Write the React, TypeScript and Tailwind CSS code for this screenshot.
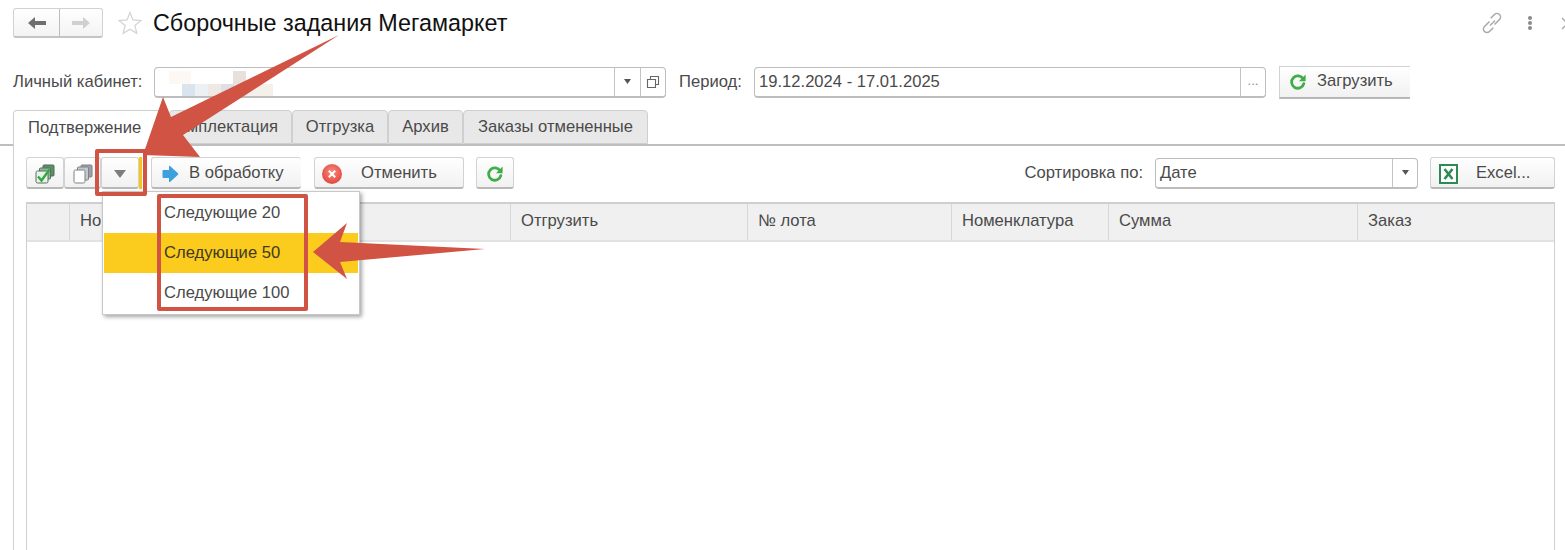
import type { ReactNode } from 'react';

const TEXT = 'text-[#4a4a4a]';

function RefreshIcon({ size = 20 }: { size?: number }) {
  return (
    <svg width={size} height={size} viewBox="0 0 20 20" fill="none">
      <path d="M15.2 7a6.2 6.2 0 1 0 .6 4.6" stroke="#3fae49" strokeWidth="2.8" strokeLinecap="round" />
      <path d="M17.6 2.6v6.6h-6.6z" fill="#3fae49" />
    </svg>
  );
}

function Btn({ className, children }: { className: string; children: ReactNode }) {
  return (
    <div
      className={`flex shrink-0 items-center rounded-[3px] border border-[#d2d2d2] border-b-[2px] border-b-[#b8b8b8] bg-gradient-to-b from-white to-[#f1f1f1] pt-[2px] ${className}`}
    >
      {children}
    </div>
  );
}

function Field({ className, children }: { className: string; children: ReactNode }) {
  return (
    <div
      className={`flex shrink-0 items-center rounded-[4px] border border-[#bdbdbd] border-b-[2px] bg-white ${className}`}
    >
      {children}
    </div>
  );
}

function Caret({ big }: { big?: boolean }) {
  return big ? (
    <svg width="12" height="8" viewBox="0 0 12 8">
      <path d="M0 0h12L6 8z" fill="#7d7d7d" />
    </svg>
  ) : (
    <svg width="7" height="5" viewBox="0 0 7 5">
      <path d="M0 0h7L3.5 5z" fill="#555" />
    </svg>
  );
}

const columns = [
  { title: '', width: 'w-[43px]' },
  { title: 'Но', width: 'w-[441px]' },
  { title: 'Отгрузить', width: 'w-[237px]' },
  { title: '№ лота', width: 'w-[204px]' },
  { title: 'Номенклатура', width: 'w-[157px]' },
  { title: 'Сумма', width: 'w-[249px]' },
  { title: 'Заказ', width: 'flex-1' },
];

export default function App() {
  return (
    <div className={`relative h-[550px] w-[1565px] overflow-hidden bg-white font-['Liberation_Sans',Arial,sans-serif] text-[16.6px] ${TEXT}`}>
      {/* Title row */}
      <div className="flex h-[66px] items-start pl-[13px] pt-[8px]">
        <div className="flex h-[30px] w-[90px] rounded-[3px] border border-[#d2d2d2] border-b-[2px] border-b-[#c4c4c4] bg-gradient-to-b from-white to-[#f3f3f3]">
          <div className="flex w-[46px] items-center justify-center border-r border-[#bdbdbd]">
            <svg width="18" height="14" viewBox="0 0 18 14"><path d="M0 7l7-6v4h11v4H7v4z" fill="#6f6f6f" /></svg>
          </div>
          <div className="flex flex-1 items-center justify-center">
            <svg width="18" height="14" viewBox="0 0 18 14"><path d="M18 7l-7-6v4H0v4h11v4z" fill="#d0d0d0" /></svg>
          </div>
        </div>
        <svg className="ml-[15px] mt-[3px]" width="24" height="24" viewBox="0 0 24 24" fill="none">
          <path d="M12 1.5l3 7.4 8 .6-6.100 5.100 1.900 7.800L12 18.200l-6.800 4.200 1.900-7.800L1 9.500l8-.6z" stroke="#d4d4d4" strokeWidth="1.300" />
        </svg>
        <div className="ml-[11px] text-[23.35px] leading-[30px] text-[#111]">Сборочные задания Мегамаркет</div>
        <div className="ml-auto flex items-center pt-[3px]">
          <svg width="24" height="24" viewBox="0 0 24 24" fill="none" stroke="#a8a8a8" strokeWidth="1.500">
            <path d="M10 14.500l5-5M9.500 10.500L4.500 15.500a3.500 3.500 0 0 0 5 5l3.800-3.800M14.500 13.500L19.500 8.500a3.500 3.500 0 0 0-5-5l-3.800 3.800" />
          </svg>
          <div className="ml-[24px] flex w-[4px] flex-col gap-[1px]">
            <span className="h-[4px] w-[4px] rounded-full bg-[#8a8a8a]" />
            <span className="h-[4px] w-[4px] rounded-full bg-[#8a8a8a]" />
            <span className="h-[4px] w-[4px] rounded-full bg-[#8a8a8a]" />
          </div>
          <svg className="ml-[29px] mr-[-9px]" width="13" height="13" viewBox="0 0 13 13" stroke="#a8a8a8" strokeWidth="1.300">
            <path d="M1 1l11 11M12 1L1 12" />
          </svg>
        </div>
      </div>

      {/* Cabinet and period row */}
      <div className="flex h-[32px] items-center pl-[13px]">
        <div className="w-[141px]">Личный кабинет:</div>
        <Field className="h-[31px] w-[512px]">
          <div className="relative h-full flex-1">
            {/* blurred-out account name */}
            <div className="absolute left-[14px] top-[3px] h-[24px] w-[104px]">
              <div className="absolute left-[0px] top-[0px] h-[13px] w-[22px] bg-[#fdf8f4]" />
              <div className="absolute left-[64px] top-[0px] h-[13px] w-[13px] bg-[#e8e0da]" />
              <div className="absolute left-[13px] top-[13px] h-[12px] w-[13px] bg-[#d9e4ef]" />
              <div className="absolute left-[26px] top-[13px] h-[12px] w-[13px] bg-[#eef1f4]" />
              <div className="absolute left-[39px] top-[13px] h-[12px] w-[13px] bg-[#f0e9e3]" />
              <div className="absolute left-[52px] top-[13px] h-[12px] w-[13px] bg-[#dcdfe6]" />
              <div className="absolute left-[65px] top-[13px] h-[12px] w-[13px] bg-[#e3e9f0]" />
              <div className="absolute left-[78px] top-[13px] h-[12px] w-[26px] bg-[#f6f0ea]" />
            </div>
          </div>
          <div className="flex h-full w-[26px] items-center justify-center border-l border-[#c4c4c4]">
            <Caret />
          </div>
          <div className="flex h-full w-[25px] items-center justify-center border-l border-[#c4c4c4]">
            <svg width="14" height="14" viewBox="0 0 14 14" fill="none" stroke="#666" strokeWidth="1.100">
              <path d="M4.500 4.500V1.500h8v8h-3" />
              <path d="M1.500 4.500h8v8h-8z" />
            </svg>
          </div>
        </Field>
        <div className="ml-[13px] w-[75px]">Период:</div>
        <Field className="h-[31px] w-[512px]">
          <div className="flex-1 pl-[4px] pt-[1px]">19.12.2024 - 17.01.2025</div>
          <div className="flex h-full w-[25px] items-center justify-center border-l border-[#c4c4c4] pb-[1px] text-[13px] text-[#888]">...</div>
        </Field>
        <div className="ml-[13px] flex h-[33px] w-[131px] items-center border border-r-0 border-[#d2d2d2] border-b-[2px] border-b-[#b8b8b8] bg-gradient-to-b from-white to-[#f1f1f1] pl-[8px]">
          <RefreshIcon />
          <span className="ml-[9px]">Загрузить</span>
        </div>
      </div>

      {/* Tabs */}
      <div className="mt-[12px] flex h-[36px] border-b-[2px] border-[#bfbfbf] pl-[13px]">
        <div className="flex h-[36px] w-[156px] items-center rounded-t-[4px] border border-b-0 border-[#cfcfcf] bg-white pl-[14px]">Подтвержение</div>
        <div className="flex w-[123px] items-center justify-end rounded-t-[4px] border border-[#cfcfcf] bg-[#e8e8e8] pr-[13px]">Комплектация</div>
        <div className="flex w-[96px] items-center justify-center rounded-t-[4px] border border-[#cfcfcf] bg-[#e8e8e8]">Отгрузка</div>
        <div className="flex w-[75px] items-center justify-center rounded-t-[4px] border border-[#cfcfcf] bg-[#e8e8e8]">Архив</div>
        <div className="flex w-[185px] items-center justify-center rounded-t-[4px] border border-[#cfcfcf] bg-[#e8e8e8]">Заказы отмененные</div>
      </div>

      {/* Tab body */}
      <div className="ml-[13px] h-[404px] border-l border-[#d0d0d0] pl-[12px] pt-[11px]">
        {/* Toolbar */}
        <div className="flex h-[32px] items-center">
          <Btn className="h-[32px] w-[38px] justify-center">
            <svg width="22" height="22" viewBox="0 0 22 22">
              <rect x="9" y="2" width="11" height="11" rx="1" fill="#5f8f6a" stroke="#4a6b55" />
              <rect x="5.500" y="5" width="11" height="11" rx="1" fill="#8fb896" stroke="#55705d" />
              <rect x="2" y="8" width="12" height="12" rx="1.500" fill="#e9f3e9" stroke="#5b6f60" />
              <path d="M4 13.500l3.500 4 8-11" fill="none" stroke="#35a83f" strokeWidth="2.400" />
            </svg>
          </Btn>
          <Btn className="h-[32px] w-[37px] justify-center">
            <svg width="22" height="22" viewBox="0 0 22 22" fill="#fff" stroke="#7d8287">
              <rect x="9" y="2" width="11" height="12" rx="1" fill="#9aa0a5" />
              <rect x="5.500" y="4" width="11" height="13" rx="1" fill="#c5c9cc" />
              <rect x="2" y="7" width="11" height="13" rx="1.500" />
            </svg>
          </Btn>
          <Btn className="h-[32px] w-[38px] justify-center">
            <Caret big />
          </Btn>
          <div className="h-[32px] w-[3px] bg-[#f6c51c]" />
          <Btn className="ml-[9px] h-[32px] w-[150px] border-r-0 pl-[10px]">
            <svg width="17" height="18" viewBox="0 0 17 18">
              <path d="M1.500 5h5.500V1.500q0-1 1-.5l8 7.300q.6.700 0 1.400l-8 7.300q-1 .5-1-.5V13H1.500q-1 0-1-1V6q0-1 1-1z" fill="#3ea0dc" />
            </svg>
            <span className="ml-[10px]">В обработку</span>
          </Btn>
          <Btn className="ml-[13px] h-[32px] w-[150px] pl-[7px]">
            <svg width="20" height="20" viewBox="0 0 20 20">
              <defs>
                <radialGradient id="cancel-fill" cx="50%" cy="40%" r="60%">
                  <stop offset="0%" stopColor="#f78d80" />
                  <stop offset="100%" stopColor="#e4463c" />
                </radialGradient>
              </defs>
              <circle cx="10" cy="10" r="10" fill="url(#cancel-fill)" />
              <path d="M6.800 6.800l6.400 6.400M13.200 6.800l-6.400 6.400" stroke="#fff" strokeWidth="2" />
            </svg>
            <span className="ml-[19px]">Отменить</span>
          </Btn>
          <Btn className="ml-[12px] h-[32px] w-[38px] justify-center">
            <RefreshIcon />
          </Btn>
          <div className="ml-auto mr-[12px] pt-[1px]">Сортировка по:</div>
          <Field className="h-[31px] w-[263px]">
            <div className="flex-1 pl-[4px] pt-[1px]">Дате</div>
            <div className="flex h-full w-[25px] items-center justify-center border-l border-[#c4c4c4]">
              <Caret />
            </div>
          </Field>
          <Btn className="ml-[12px] mr-[10px] h-[32px] w-[125px] pl-[8px]">
            <svg width="19" height="20" viewBox="0 0 19 20">
              <rect x="1" y="1" width="17" height="18" fill="#fff" stroke="#2d8a55" strokeWidth="2" />
              <path d="M5.500 5l8 10M13.500 5l-8 10" stroke="#2d8a55" strokeWidth="2.600" />
            </svg>
            <span className="ml-[18px]">Excel...</span>
          </Btn>
        </div>

        {/* Table */}
        <div className="mr-[10px] mt-[13px] h-[400px] border-l border-r border-t-[2px] border-[#cfcfcf]">
          <div className="flex h-[38px] border-b-[2px] border-[#e2e2e2] bg-[#f0f0f0]">
            {columns.map((col, i) => (
              <div key={i} className={`flex items-center border-r border-[#d8d8d8] pb-[2px] pl-[10px] last:border-r-0 ${col.width}`}>
                {col.title}
              </div>
            ))}
          </div>
        </div>
      </div>

      {/* Dropdown menu */}
      <div className="absolute left-[102px] top-[191px] h-[124px] w-[258px] border border-[#c8c8c8] bg-white px-[1px] py-[1px] shadow-[2px_2px_4px_rgba(0,0,0,0.35)]">
        <div className="flex h-[40px] items-center pl-[60px]">Следующие 20</div>
        <div className="flex h-[40px] items-center bg-[#fbcb1e] pl-[60px] text-[#3f3a20]">Следующие 50</div>
        <div className="flex h-[40px] items-center pl-[60px]">Следующие 100</div>
      </div>

      {/* Annotations */}
      <div className="absolute left-[95px] top-[149px] h-[47px] w-[52px] rounded-[2px] border-[4px] border-[#d05344]" />
      <div className="absolute left-[157px] top-[194px] h-[117px] w-[151px] rounded-[2px] border-[4px] border-[#d05344]" />
      <svg className="absolute left-0 top-0" width="1565" height="550" viewBox="0 0 1565 550">
        <path d="M339 35L171 117 163 97 143 155 200 157 183 135z" fill="#d05344" />
        <path d="M485 249L340 242 347 223 313 252 347 279 340 262z" fill="#d05344" />
      </svg>
    </div>
  );
}
